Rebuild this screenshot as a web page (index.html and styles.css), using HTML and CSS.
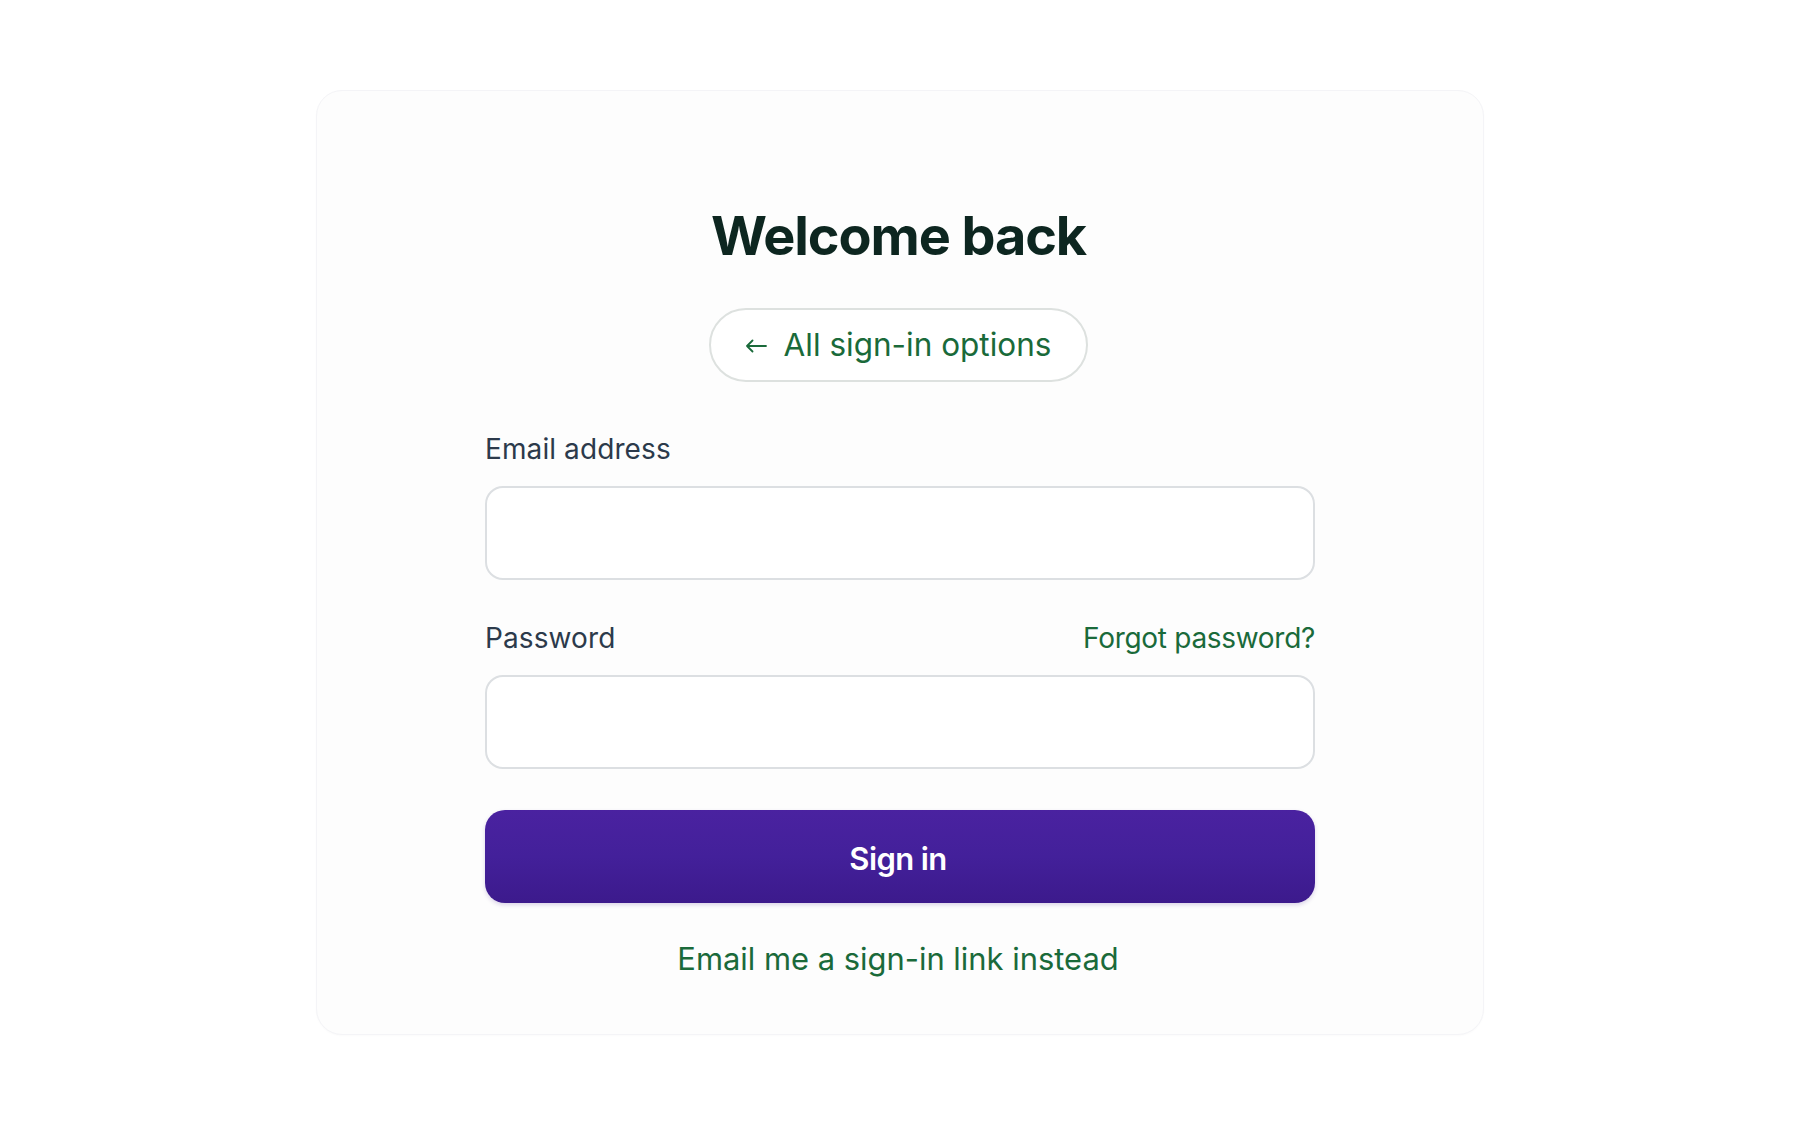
FILE: index.html
```html
<!DOCTYPE html>
<html lang="en">
<head>
<meta charset="utf-8">
<title>Welcome back</title>
<link rel="stylesheet" href="styles.css">
</head>
<body>
<main class="page">
  <section class="card">
    <h1 class="title">Welcome back</h1>
    <button class="pill" type="button">
      <svg class="arrow" width="22" height="14" viewBox="0 0 22 14" aria-hidden="true">
        <path d="M21 7H2M7.5 1.5L2 7l5.5 5.5" fill="none" stroke="currentColor" stroke-width="1.8" stroke-linecap="round" stroke-linejoin="round"/>
      </svg>
      <span>All sign-in options</span>
    </button>
    <form class="form">
      <label class="label label-email" for="email">Email address</label>
      <input class="field" id="email" type="email">
      <div class="label-row">
        <label class="label" for="password">Password</label>
        <a class="link forgot" href="#">Forgot password?</a>
      </div>
      <input class="field" id="password" type="password">
      <button class="submit" type="button">Sign in</button>
      <a class="link magic" href="#">Email me a sign-in link instead</a>
    </form>
  </section>
</main>
</body>
</html>
```

FILE: styles.css
```css
* { box-sizing: border-box; }
html, body { margin: 0; padding: 0; background: #ffffff; }
body {
  font-family: Inter, "Noto Sans", "Liberation Sans", sans-serif;
  width: 1800px;
  height: 1125px;
}
.page {
  display: flex;
  justify-content: center;
  padding-top: 90px;
}
.card {
  width: 1168px;
  height: 945px;
  background: #fdfdfd;
  border: 1px solid #f4f4f7;
  border-radius: 26px;
  box-shadow: 0 1px 2px rgba(20, 20, 60, 0.02);
  display: flex;
  flex-direction: column;
  align-items: center;
  padding: 112px 168px 0;
}
.title {
  margin: 0;
  font-size: 54px;
  line-height: 65px;
  font-weight: 700;
  letter-spacing: -1.1px;
  color: #0d2620;
  margin-left: -3px;
}
.pill {
  margin-top: 40px;
  height: 74px;
  width: 379px;
  border-radius: 37px;
  border: 2px solid #dde1df;
  background: #ffffff;
  display: flex;
  align-items: center;
  justify-content: center;
  gap: 17px;
  padding: 0 0 2px 0;
  margin-left: -4px;
  font-family: inherit;
  font-size: 31.5px;
  font-weight: 400;
  letter-spacing: 0;
  color: #1a6a3a;
  cursor: pointer;
}
.arrow { flex: none; margin-top: 3px; }
.form {
  width: 830px;
  display: flex;
  flex-direction: column;
  margin-top: 50px;
}
.label {
  font-size: 28px;
  line-height: 34px;
  color: #2c3a4b;
  letter-spacing: 0.1px;
}
.label-row {
  display: flex;
  justify-content: space-between;
  align-items: baseline;
  margin-top: 41px;
}
.field {
  margin-top: 20px;
  height: 94px;
  width: 100%;
  border: 2px solid #dcdfe2;
  border-radius: 18px;
  background: #ffffff;
  font-family: inherit;
  font-size: 28px;
  padding: 0 24px;
  outline: none;
}
.link {
  color: #1a6a3a;
  text-decoration: none;
}
.forgot {
  font-size: 28px;
  line-height: 34px;
  letter-spacing: -0.3px;
}
.submit {
  margin-top: 41px;
  height: 93px;
  width: 100%;
  border: none;
  border-radius: 20px;
  background: linear-gradient(180deg, #4a22a0 0%, #43209a 50%, #3c1a8c 100%);
  box-shadow: 0 2px 4px rgba(60, 26, 140, 0.18);
  color: #ffffff;
  font-family: inherit;
  font-size: 31px;
  font-weight: 600;
  letter-spacing: -0.6px;
  padding: 3px 4px 0 0;
  cursor: pointer;
}
.magic {
  margin-top: 38px;
  align-self: center;
  font-size: 30.9px;
  line-height: 36px;
  letter-spacing: 0;
  margin-left: -4px;
}
```
